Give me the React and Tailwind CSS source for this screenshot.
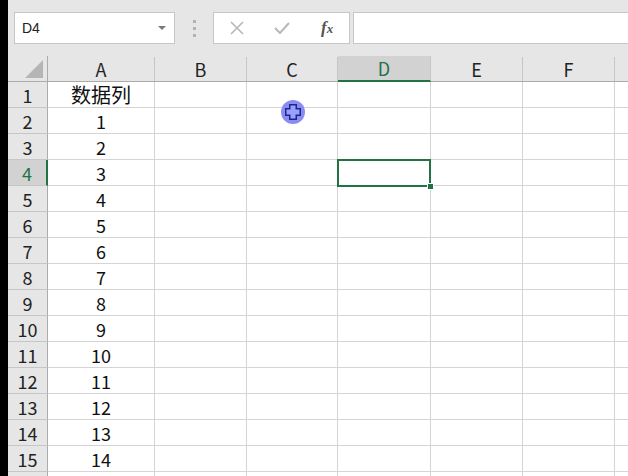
import React from 'react'

const cols = [
  { name: 'A', w: 'w-[107px]' },
  { name: 'B', w: 'w-[92px]' },
  { name: 'C', w: 'w-[91px]' },
  { name: 'D', w: 'w-[93px]' },
  { name: 'E', w: 'w-[92px]' },
  { name: 'F', w: 'w-[92px]' },
  { name: '', w: 'w-[20px]' },
]

const aValues = ['数据列', '1', '2', '3', '4', '5', '6', '7', '8', '9', '10', '11', '12', '13', '14', '']

const font = { fontFamily: '"Noto Sans CJK SC", "Noto Sans", sans-serif' }

function Cursor() {
  return (
    <svg className="absolute left-[265px] top-[92px]" width="40" height="40" viewBox="0 0 40 40">
      <circle cx="20" cy="20" r="12" fill="#8a8cf5" />
      <path d="M16 12h8v4h4v8h-4v4h-8v-4h-4v-8h4z" fill="#1f2580" />
      <path d="M17.5 13.5h5v4h4v5h-4v4h-5v-4h-4v-5h4z" fill="#9aa0ff" />
    </svg>
  )
}

export default function App() {
  return (
    <div className="w-[628px] h-[476px] bg-[#e6e6e6] flex overflow-hidden" style={font}>
      <div className="w-[8px] shrink-0 bg-black" />
      <div className="flex-1 flex flex-col min-w-0 relative">
        {/* toolbar */}
        <div className="h-[56px] shrink-0 flex items-start pt-[12px] pl-[6px]">
          <div className="w-[161px] h-[32px] bg-white border border-[#c6c6c6] flex items-center justify-between pl-[7px] pr-[8px]">
            <span className="text-[14px] text-[#222]" style={{ fontFamily: '"Liberation Sans", sans-serif' }}>D4</span>
            <svg width="8" height="5" viewBox="0 0 8 5">
              <path d="M0 0h8L4 4z" fill="#7a7a7a" />
            </svg>
          </div>
          <div className="w-[38px] h-[32px] flex flex-col items-center justify-center gap-[4px]">
            <div className="w-[3px] h-[3px] bg-[#b2b2b2]" />
            <div className="w-[3px] h-[3px] bg-[#b2b2b2]" />
            <div className="w-[3px] h-[3px] bg-[#b2b2b2]" />
          </div>
          <div className="w-[137px] h-[32px] bg-white border border-[#c6c6c6] flex items-center">
            <div className="w-[46px] flex justify-center">
              <svg width="14" height="14" viewBox="0 0 14 14">
                <path d="M1 1L13 13M13 1L1 13" stroke="#b8b8b8" strokeWidth="1.6" />
              </svg>
            </div>
            <div className="w-[46px] flex justify-center">
              <svg width="16" height="12" viewBox="0 0 16 12">
                <path d="M1 6l5 5L15 1" stroke="#b8b8b8" strokeWidth="2" fill="none" />
              </svg>
            </div>
            <div className="w-[44px] flex justify-center">
              <span className="text-[17px] italic font-bold text-[#555]" style={{ fontFamily: '"Liberation Serif", serif' }}>
                f<span className="text-[13px]">x</span>
              </span>
            </div>
          </div>
          <div className="ml-[3px] flex-1 h-[32px] bg-white border border-[#c6c6c6] border-r-0" />
        </div>

        {/* grid */}
        <div className="flex-1 bg-white">
          {/* header row */}
          <div className="flex h-[26px] bg-[#e6e6e6] border-b border-[#ababab]">
            <div className="w-[40px] shrink-0 border-r border-[#ababab] relative">
              <svg className="absolute right-[4px] bottom-[3px]" width="18" height="18" viewBox="0 0 18 18">
                <path d="M18 0V18H0z" fill="#b5b5b5" />
              </svg>
            </div>
            {cols.map((c, j) => (
              <div
                key={j}
                className={`${c.w} shrink-0 flex items-center justify-center text-[18px] leading-none ${
                  c.name === 'D'
                    ? 'bg-[#d2d2d2] text-[#217346] border-b-2 border-[#217346] -mb-[1px] border-r border-r-[#c6c6c6]'
                    : 'text-[#222] border-r border-[#c6c6c6] mt-[1px]'
                }`}
              >
                {c.name}
              </div>
            ))}
          </div>
          {aValues.map((v, i) => (
            <div key={i} className="flex h-[26px]">
              <div
                className={`w-[40px] shrink-0 flex items-center justify-center text-[18px] leading-none border-b border-[#c6c6c6] ${
                  i === 3
                    ? 'bg-[#d2d2d2] text-[#217346] border-r-2 border-r-[#217346]'
                    : 'bg-[#e6e6e6] text-[#222] border-r border-r-[#ababab]'
                }`}
              >
                {i < 15 ? i + 1 : ''}
              </div>
              {cols.map((c, j) => (
                <div
                  key={j}
                  className={`${c.w} shrink-0 border-r border-b border-[#d4d4d4] flex items-center justify-center leading-none text-[#111] ${
                    i === 0 ? 'text-[20px]' : 'text-[18px]'
                  }`}
                >
                  {j === 0 ? v : ''}
                </div>
              ))}
            </div>
          ))}
        </div>

        {/* selection */}
        <div className="absolute left-[329px] top-[159px] w-[94px] h-[28px] border-2 border-[#217346]" />
        <div className="absolute left-[420px] top-[184px] w-[5px] h-[5px] bg-[#217346] outline outline-1 outline-white" />
        <Cursor />
      </div>
    </div>
  )
}
